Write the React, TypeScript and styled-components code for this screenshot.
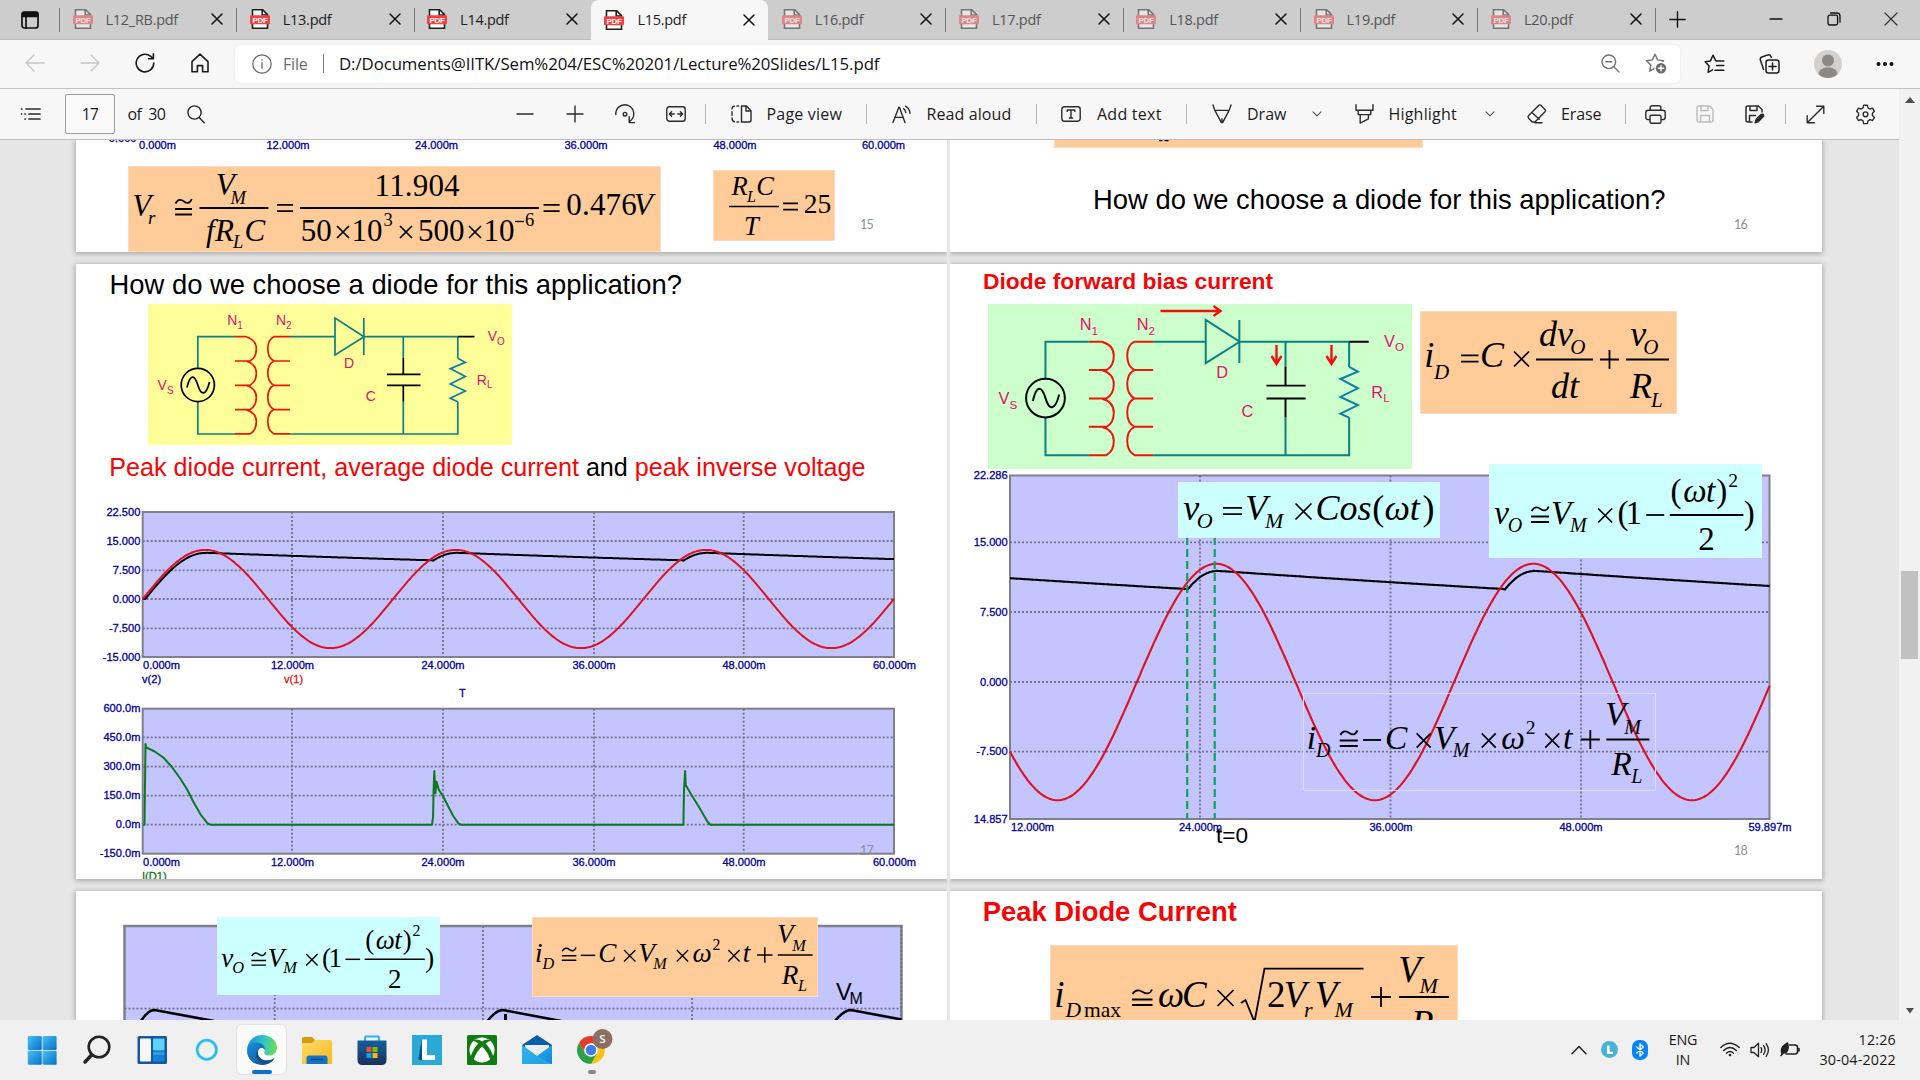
import React, { createContext, useContext } from "react";
import styled, { createGlobalStyle, css } from "styled-components";

const UI = `"Open Sans", "Noto Sans", sans-serif`;
const SANS = `"Liberation Sans", Arial, sans-serif`;
const SERIF = `"Liberation Serif", "Times New Roman", serif`;

const GlobalStyle = createGlobalStyle`
  * { box-sizing: border-box; }
  html, body { margin: 0; padding: 0; }
  body { width: 1920px; height: 1080px; overflow: hidden; font-family: ${UI}; color: #1b1b1b; background: #e6e6e6; }
  svg { display: block; flex: none; }
`;

const Screen = styled.div`
  display: flex;
  flex-direction: column;
  width: 1920px;
  height: 1080px;
  overflow: hidden;
`;

/* ---------- icons ---------- */

type IconProps = { w?: number; h?: number; vb?: string; c?: string; sw?: number; children: React.ReactNode };
const Icon = ({ w = 20, h = 20, vb, c = "#2b2b2b", sw = 1.4, children }: IconProps) => (
  <svg width={w} height={h} viewBox={vb ?? `0 0 ${w} ${h}`} fill="none" stroke={c} strokeWidth={sw} strokeLinecap="round" strokeLinejoin="round">
    {children}
  </svg>
);

const PdfMark = styled.text`
  font-family: ${SANS};
  font-weight: 700;
  font-size: 8px;
  fill: #fff;
  stroke: none;
`;

const PdfIcon = () => (
  <Icon vb="0 0 20 20" c="#1f1f1f" sw={1.6}>
    <path d="M2.5 19.2V.8h10.2l4.8 4.8v13.6z" fill="#fff" strokeLinejoin="miter" />
    <path d="M12.2 1v5h5" strokeLinejoin="miter" />
    <rect x="0" y="6.2" width="20" height="9" rx="1" fill="#f23f42" stroke="none" />
    <PdfMark x="10" y="13.6" textAnchor="middle">PDF</PdfMark>
  </Icon>
);

const CrossIcon = ({ s = 10, c = "#111", sw = 1.5 }: { s?: number; c?: string; sw?: number }) => (
  <Icon w={s + 2} h={s + 2} c={c} sw={sw}>
    <path d={`M1 1L${s + 1} ${s + 1}M${s + 1} 1L1 ${s + 1}`} />
  </Icon>
);

const Chevron = () => (
  <Icon w={10} h={6} c="#555" sw={1.2}><path d="M1 .8l4 4 4-4" /></Icon>
);

/* ---------- tab strip ---------- */

const TabStrip = styled.div`
  display: flex;
  height: 40px;
  flex: none;
  background: #cdcdcd;
  border-bottom: 1px solid #bdbdbd;
`;
const TabActions = styled.div`
  width: 59px;
  display: flex;
  align-items: center;
  padding-left: 21px;
`;
const Tab = styled.div<{ $active?: boolean; $dim?: boolean; $rule?: boolean }>`
  display: flex;
  align-items: center;
  width: 177.3px;
  flex: none;
  padding: 0 13px 1px 13.5px;
  font-size: 14.5px;
  letter-spacing: -0.28px;
  color: ${(p) => (p.$dim ? "#555" : "#1b1b1b")};
  ${(p) => p.$rule && css`background: linear-gradient(#777, #777) 0 8px / 1px 24px no-repeat;`}
  ${(p) => p.$active && css`
    height: 40px;
    background: #f7f7f7;
    border-radius: 8px 8px 0 0;
  `}
`;
const TabIcon = styled.span<{ $dim?: boolean }>`opacity: ${(p) => (p.$dim ? 0.5 : 1)};`;
const TabTitle = styled.span`
  flex: 1;
  padding-left: 13px;
  white-space: nowrap;
`;
const StripEnd = styled.div`
  display: flex;
  align-items: center;
  justify-content: space-between;
  flex: 1;
  height: 38px;
  padding: 0 22px 0 14px;
  background: linear-gradient(#777, #777) 0 8px / 1px 24px no-repeat;
`;
const WindowButtons = styled.div`
  display: flex;
  align-items: center;
  gap: 43.5px;
`;

const tabs = [
  { name: "L12_RB.pdf", dim: true, rule: true },
  { name: "L13.pdf", rule: true },
  { name: "L14.pdf", rule: true },
  { name: "L15.pdf", active: true },
  { name: "L16.pdf", dim: true },
  { name: "L17.pdf", dim: true, rule: true },
  { name: "L18.pdf", dim: true, rule: true },
  { name: "L19.pdf", dim: true, rule: true },
  { name: "L20.pdf", dim: true, rule: true },
];

const Tabs = () => (
  <TabStrip>
    <TabActions>
      <Icon w={18} h={18} c="#111" sw={1.7}>
        <rect x="1" y="1" width="16" height="16" rx="2.5" />
        <path d="M1.5 1.5h15v4h-15z" fill="#111" />
        <path d="M5 6v11" />
      </Icon>
    </TabActions>
    {tabs.map((t) => (
      <Tab key={t.name} $active={t.active} $dim={t.dim} $rule={t.rule}>
        <TabIcon $dim={t.dim}><PdfIcon /></TabIcon>
        <TabTitle>{t.name}</TabTitle>
        <CrossIcon />
      </Tab>
    ))}
    <StripEnd>
      <Icon w={17} h={17} c="#111"><path d="M8.5 .8v15.4M.8 8.5h15.4" /></Icon>
      <WindowButtons>
        <Icon w={14} h={14} c="#111" sw={1.3}><path d="M1 7h12" /></Icon>
        <Icon w={14} h={14} c="#111" sw={1.3}>
          <rect x="1" y="3.2" width="9.6" height="9.8" rx="1.8" />
          <path d="M3.6 1h6.2a3.2 3.2 0 013.2 3.2v6" />
        </Icon>
        <CrossIcon s={12} c="#333" sw={1.2} />
      </WindowButtons>
    </StripEnd>
  </TabStrip>
);

/* ---------- address bar ---------- */

const AddressRow = styled.div`
  display: flex;
  align-items: center;
  height: 49px;
  flex: none;
  background: #f7f7f7;
  border-bottom: 1px solid #c0c0c0;
`;
const NavButtons = styled.div`
  display: flex;
  align-items: center;
  gap: 35px;
  width: 235px;
  padding: 0 0 2px 25px;
`;
const AddressField = styled.div`
  display: flex;
  align-items: center;
  width: 1445px;
  height: 38px;
  padding: 0 13px 1px 17px;
  background: #fff;
  border-radius: 5px;
  box-shadow: 0 0 3px rgba(0, 0, 0, 0.08);
`;
const Scheme = styled.span`
  width: 41px;
  padding-left: 11px;
  font-size: 16px;
  color: #6b6b6b;
  letter-spacing: -0.2px;
`;
const FieldRule = styled.span`
  width: 1px;
  height: 19px;
  margin: 0 15px 0 10px;
  background: #7d7d7d;
`;
const Url = styled.span`
  flex: 1;
  font-size: 16.8px;
  letter-spacing: -0.07px;
  color: #111;
  white-space: nowrap;
`;
const FieldIcons = styled.div`
  display: flex;
  align-items: center;
  gap: 25px;
`;
const BrowserActions = styled.div`
  display: flex;
  align-items: center;
  gap: 34px;
  padding-left: 24px;
`;

const STAR = "M10 1.2l2.6 5.7 6 .8-4.5 4.2 1.2 6.3L10 15.1l-5.3 3.1 1.2-6.3L1.4 7.7l6-.8z";

const AddressBar = () => (
  <AddressRow>
    <NavButtons>
      <Icon c="#c6c6c6"><path d="M19 10H1M9 2l-8 8 8 8" /></Icon>
      <Icon c="#c6c6c6"><path d="M1 10h18M11 2l8 8-8 8" /></Icon>
      <Icon c="#1b1b1b" sw={1.6}><path d="M18.8 10A8.8 8.8 0 1 1 15.5 3.2L18.4 5.6M18.4.9v4.9h-4.9" /></Icon>
      <Icon c="#1b1b1b" sw={1.6}><path d="M2 8.6L10 1.2l8 7.4v10.2h-5.4v-6.2H7.4v6.2H2z" /></Icon>
    </NavButtons>
    <AddressField>
      <Icon c="#6b6b6b" sw={1.3}><circle cx="10" cy="10" r="9.2" /><path d="M10 8.7v5.6M10 5.6v.4" /></Icon>
      <Scheme>File</Scheme>
      <FieldRule />
      <Url>D:/Documents@IITK/Sem%204/ESC%20201/Lecture%20Slides/L15.pdf</Url>
      <FieldIcons>
        <Icon w={19} h={19} c="#737373"><circle cx="7.8" cy="7.8" r="6.8" /><path d="M4.8 7.8h6M12.8 12.8l5.2 5.2" /></Icon>
        <Icon w={22} h={22} c="#737373">
          <path d={STAR} />
          <circle cx="16" cy="15.2" r="6.4" fill="#fff" stroke="none" />
          <circle cx="16" cy="15.2" r="5.2" fill="#6b6b6b" stroke="none" />
          <path d="M16 12.6v5.2M13.4 15.2h5.2" stroke="#fff" />
        </Icon>
      </FieldIcons>
    </AddressField>
    <BrowserActions>
      <Icon w={21} h={20} c="#1b1b1b" sw={1.5}>
        <path d="M12 6.8h-.2L9 1.2 6.4 6.9l-5.2.8 3.9 4.2-1 6.4 4.4-2.4M12.6 7h7.2M12.6 11.6h7.2M11 16.2h8.8" />
      </Icon>
      <Icon w={21} h={20} c="#1b1b1b" sw={1.5}>
        <rect x="7" y="6" width="13" height="13" rx="2.5" />
        <path d="M13.5 9v7M10 12.5h7M4.5 15.3L1.3 5.8Q.8 3.8 2.8 3L9 .9q2-.5 2.8 1.2l.6 1.2" />
      </Icon>
      <Icon w={28} h={28} sw={0}>
        <circle cx="14" cy="14" r="14" fill="#d3d1cf" />
        <circle cx="14" cy="10.5" r="6" fill="#8b8885" />
        <path d="M4.5 24.2c1-5 4.5-6.6 9.5-6.6s8.5 1.6 9.5 6.6A14 14 0 0 1 4.5 24.2z" fill="#8b8885" />
      </Icon>
      <Icon w={18} h={6} sw={0}>
        <circle cx="2.5" cy="3" r="2" fill="#111" /><circle cx="9" cy="3" r="2" fill="#111" /><circle cx="15.5" cy="3" r="2" fill="#111" />
      </Icon>
    </BrowserActions>
  </AddressRow>
);

/* ---------- pdf toolbar and scrollbar ---------- */

const Main = styled.div`
  display: flex;
  height: 931px;
  flex: none;
`;
const Reader = styled.div`
  display: flex;
  flex-direction: column;
  width: 1899px;
`;
const Toolbar = styled.div`
  display: flex;
  align-items: center;
  height: 51px;
  flex: none;
  padding-left: 20px;
  background: #f7f7f7;
  border-bottom: 1px solid #bdbdbd;
  font-size: 16px;
`;
const Tool = styled.div<{ $w: number; $ml?: number }>`
  display: flex;
  align-items: center;
  width: ${(p) => p.$w}px;
  flex: none;
  margin-left: ${(p) => p.$ml ?? 0}px;
  white-space: nowrap;
`;
const ToolLabel = styled.span<{ $ls?: number; $ml?: number; $w?: number }>`
  margin-left: ${(p) => p.$ml ?? 0}px;
  letter-spacing: ${(p) => p.$ls ?? 0}px;
  ${(p) => p.$w && css`width: ${p.$w}px;`}
`;
const ToolRule = styled.div<{ $ml: number }>`
  width: 1px;
  height: 20px;
  flex: none;
  margin-left: ${(p) => p.$ml}px;
  background: #b5b5b5;
`;
const PageInput = styled.div`
  display: flex;
  align-items: center;
  justify-content: center;
  width: 50px;
  height: 40px;
  margin-left: 24px;
  border: 1px solid #9b9b9b;
  border-radius: 2px;
  background: #f9f9f9;
  font-size: 15.5px;
  letter-spacing: -0.6px;
`;

const PdfToolbar = () => (
  <Toolbar>
    <Tool $w={21}>
      <Icon w={21} h={14}><path d="M6 2h14M9 7h11M9 12h11M1.5 2h.4M1.5 7h.2M5 7h.4M5 12h.4" strokeWidth="1.7" /></Icon>
    </Tool>
    <PageInput>17</PageInput>
    <Tool $w={34} $ml={12.5}><ToolLabel $ls={-0.65}>of&nbsp; 30</ToolLabel></Tool>
    <Tool $w={18} $ml={25.5}><Icon w={18} h={19}><circle cx="7.5" cy="7.5" r="6.6" /><path d="M12.2 12.4l5 5.4" /></Icon></Tool>
    <Tool $w={18} $ml={311}><Icon w={18} h={18}><path d="M1 9h16" /></Icon></Tool>
    <Tool $w={18} $ml={32}><Icon w={18} h={18}><path d="M1 9h16M9 1v16" /></Icon></Tool>
    <Tool $w={20} $ml={31}>
      <Icon><path d="M.8 10.5A9 9 0 1 1 15 17.2M14.2 12.8v5.8h5.4" /><circle cx="10" cy="10.2" r="1.8" /></Icon>
    </Tool>
    <Tool $w={20} $ml={31}>
      <Icon w={20} h={16}><rect x=".8" y=".8" width="18.4" height="14.4" rx="2.4" /><path d="M3.6 8h4.6M11.8 8h4.6M5.6 5.7L3.4 8l2.2 2.3M14.4 5.7L16.6 8l-2.2 2.3" /></Icon>
    </Tool>
    <ToolRule $ml={19} />
    <Tool $w={112} $ml={25}>
      <Icon w={21} h={18}><path d="M10.5 1h5l4.5 4.8V15q0 2-2 2h-7.500zM15 1.2V6h4.8M7.6 1H6M3.4 1.2Q1 1.4 1 3.8M1 6.8v3.4M1 13q0 3.2 2.4 3.8M6 17h1.6" /></Icon>
      <ToolLabel $ml={14.5} $ls={0.2}>Page view</ToolLabel>
    </Tool>
    <ToolRule $ml={22.5} />
    <Tool $w={120} $ml={25.5}>
      <Icon w={20} h={19}><path d="M1 17.6L6.8 2.2h.6l5.600 15.400M3 12.4h8.2M11.6 3.6q2 1.4 2.2 4M13.6 1.2q4 2.4 4.4 7.2" /></Icon>
      <ToolLabel $ml={14.5} $ls={0.1}>Read aloud</ToolLabel>
    </Tool>
    <ToolRule $ml={24} />
    <Tool $w={101} $ml={24}>
      <Icon w={20} h={16}><rect x=".8" y=".8" width="18.4" height="14.4" rx="2.6" /><path d="M6.2 5.4V4h7.6v1.4M10 4v8M8.4 12h3.2" /></Icon>
      <ToolLabel $ml={16} $ls={0.25}>Add text</ToolLabel>
    </Tool>
    <ToolRule $ml={23.5} />
    <Tool $w={110} $ml={25.5}>
      <Icon w={20} h={20}><path d="M1 1l1.8 5.4h14.4L19 1M3 6.6l6.4 12h1.2l6.400-12M10 14.8v3.8" /></Icon>
      <ToolLabel $ml={15} $w={65}>Draw</ToolLabel>
      <Chevron />
    </Tool>
    <Tool $w={140} $ml={32.5}>
      <Icon w={19} h={20}><path d="M1 .8v5.400h17V.8M3.2 6.4v4.2h12.6V6.4M5.2 10.8v8.4l8.200-4.4v-4" /></Icon>
      <ToolLabel $ml={15} $w={96.5} $ls={0.2}>Highlight</ToolLabel>
      <Chevron />
    </Tool>
    <Tool $w={76} $ml={32}>
      <Icon w={20} h={20}><path d="M1.600 11.600l10-10.200q1.200-1 2.400 0l4 4q1 1.200 0 2.400L8 18H5.200l-3.600-3.800q-1-1.400 0-2.600zM5 8.400l7.200 6.800M8 18.800h7" /></Icon>
      <ToolLabel $ml={14.5} $ls={-0.1}>Erase</ToolLabel>
    </Tool>
    <ToolRule $ml={22} />
    <Tool $w={21} $ml={19}>
      <Icon w={21} h={19}><path d="M5.2 5V2.6q0-1.800 1.800-1.800h7q1.800 0 1.800 1.800V5M4.600 14.600H3.200q-2.400 0-2.400-2.400V7.600Q.8 5.200 3.200 5.200h14.600q2.400 0 2.400 2.400v4.600q0 2.400-2.400 2.400h-1.400" /><rect x="5" y="10.200" width="11" height="8" rx="1.5" /></Icon>
    </Tool>
    <Tool $w={18} $ml={30}>
      <Icon w={18} h={18} c="#bdbdbd"><path d="M1 3q0-2 2-2h10.500L17 4.500V15q0 2-2 2H3q-2 0-2-2zM5 1v4.500h7V1M4.500 17v-6.500h9V17" /></Icon>
    </Tool>
    <Tool $w={20} $ml={31.5}>
      <Icon w={20} h={19} sw={1.5}><path d="M7 17H3q-2 0-2-2V3q0-2 2-2h10.500L17 4.500V7M5 1v4.500h7V1M4.500 17v-6.500h6" /><path d="M17.600 9.200q1.400.6 1 2l-5.200 5.400-3.200 1.200 1-3.400 5-5z" fill="#2b2b2b" /></Icon>
    </Tool>
    <ToolRule $ml={20} />
    <Tool $w={19} $ml={20}>
      <Icon w={19} h={19}><path d="M1.200 17.800L17.800 1.200M10.600 1.200h7.200v7.200M1.200 10.600v7.200h7.200" /></Icon>
    </Tool>
    <Tool $w={21} $ml={29.5}>
      <Icon w={21} h={21}>
        <path d="M8.700 1.200h3.600l.7 2.700 1.900 1.100 2.700-.8 1.800 3.100-2 1.900v2.300l2 1.900-1.800 3.100-2.700-.8-1.900 1.100-.7 2.800H8.700L8 16.800l-1.900-1.100-2.700.8-1.800-3.100 2-1.900V9.200l-2-1.900 1.800-3.100 2.700.8L8 3.900z" />
        <circle cx="10.5" cy="10.300" r="2.400" />
      </Icon>
    </Tool>
  </Toolbar>
);

const Scrollbar = styled.div`
  display: flex;
  flex-direction: column;
  justify-content: space-between;
  align-items: center;
  width: 21px;
  padding: 8px 0 6px;
  background: #f1f1f1;
`;
const Track = styled.div`
  flex: 1;
  padding-top: 468px;
`;
const Thumb = styled.div`
  width: 17px;
  height: 88px;
  background: #c1c1c1;
`;

/* ---------- slides ---------- */

const Sheet = styled.div`
  display: grid;
  grid-template-columns: 871px 872px;
  grid-template-rows: 112px 615px 129px;
  gap: 12px 3px;
  height: 880px;
  overflow: hidden;
  padding-left: 76px;
  background: #e6e6e6;
`;
const SlideBox = styled.div`
  position: relative;
  overflow: hidden;
  background: #fff;
`;
const SlideShadow = styled.div`
  display: grid;
  box-shadow: 0 1px 5px 1px rgba(0, 0, 0, 0.26);
  &:nth-child(odd) { clip-path: inset(-8px 0 -8px -8px); }
  &:nth-child(even) { clip-path: inset(-8px -8px -8px 0); }
`;

/* Items on a slide are placed in sheet coordinates; each slide knows its own origin. */
const Origin = createContext<[number, number]>([0, 0]);

const Slide = ({ at, children }: { at: [number, number]; children: React.ReactNode }) => (
  <Origin.Provider value={at}>
    <SlideShadow><SlideBox>{children}</SlideBox></SlideShadow>
  </Origin.Provider>
);

const Placed = styled.div<{ $x: number; $y: number; $w?: number; $h?: number; $fill?: string; $line?: string }>`
  position: absolute;
  left: ${(p) => p.$x}px;
  top: ${(p) => p.$y}px;
  ${(p) => p.$w && css`width: ${p.$w}px;`}
  ${(p) => p.$h && css`height: ${p.$h}px;`}
  background: ${(p) => p.$fill ?? "transparent"};
  ${(p) => p.$line && css`box-shadow: inset 0 0 0 1px ${p.$line};`}
`;

type Box = [number, number, number, number];

const Figure = ({ box, view, fill, line, children }: { box: Box; view?: Box; fill?: string; line?: string; children: React.ReactNode }) => {
  const [ox, oy] = useContext(Origin);
  const v = view ?? box;
  return (
    <Placed $x={box[0] - ox} $y={box[1] - oy} $w={box[2]} $h={box[3]} $fill={fill} $line={line}>
      <svg width={box[2]} height={box[3]} viewBox={v.join(" ")} preserveAspectRatio="none" overflow="visible">
        {children}
      </svg>
    </Placed>
  );
};

const Line = styled(Placed)<{ $size: number; $color?: string; $bold?: boolean; $family?: string; $ls?: number }>`
  font-family: ${(p) => p.$family ?? SANS};
  font-size: ${(p) => p.$size}px;
  line-height: 1;
  font-weight: ${(p) => (p.$bold ? 700 : 400)};
  color: ${(p) => p.$color ?? "#000"};
  letter-spacing: ${(p) => p.$ls ?? 0}px;
  white-space: pre;
`;
const Red = styled.span`color: #f50505;`;

type WriteProps = { x: number; y: number; size: number; color?: string; bold?: boolean; family?: string; ls?: number; children: React.ReactNode };
const Write = ({ x, y, size, color, bold, family, ls, children }: WriteProps) => {
  const [ox, oy] = useContext(Origin);
  return (
    <Line $x={x - ox} $y={y - oy - 0.8465 * size} $size={size} $color={color} $bold={bold} $family={family} $ls={ls}>{children}</Line>
  );
};
const PageNumber = ({ x, y, children }: { x: number; y: number; children: React.ReactNode }) => (
  <Write x={x} y={y} size={12.5} color="#8f8f8f" family={`Lato, ${UI}`} ls={-0.7}>{children}</Write>
);

/* ---------- formulas ---------- */

const Glyph = styled.text<{ $roman?: boolean }>`
  font-family: ${SERIF};
  font-style: ${(p) => (p.$roman ? "normal" : "italic")};
  fill: #000;
`;
const bearing: Record<string, number> = { V: 0.076, C: 0.066, v: 0.021, O: 0.06, i: 0.049, t: 0.038, "(": 0.05, "1": 0.11, "0": 0.024, "5": 0.03, "2": 0.03, T: 0.06 };
const roman = /^[0-9.()]/;

type Mark = [x: number, y: number, text: string, size: number, width?: number];
const Marks = ({ list }: { list: Mark[] }) => (
  <>
    {list.map(([x, y, t, s, w], i) => (
      <Glyph key={i} $roman={roman.test(t) || t === "max"} x={x - (bearing[t[0]] ?? 0) * s} y={y} fontSize={s} textLength={w}>{t}</Glyph>
    ))}
  </>
);

const Bar = ({ x1, x2, y, w = 1.8 }: { x1: number; x2: number; y: number; w?: number }) => (
  <path d={`M${x1} ${y}H${x2}`} stroke="#000" strokeWidth={w} />
);
const Equals = ({ x, y, w = 16 }: { x: number; y: number; w?: number }) => (
  <path d={`M${x} ${y - 3.2}h${w}M${x} ${y + 3.2}h${w}`} stroke="#000" strokeWidth="1.8" />
);
const Approx = ({ x, y, w = 18 }: { x: number; y: number; w?: number }) => (
  <path
    d={`M${x} ${y + 2}h${w}M${x} ${y + 7.5}h${w}M${x + 0.5} ${y - 3.5}c${w * 0.15} -5 ${w * 0.35} -4 ${w * 0.5} -2s${w * 0.35} 2.5 ${w * 0.45} -2.5`}
    stroke="#000" strokeWidth="1.8" fill="none"
  />
);
const Times = ({ x, y, r = 7 }: { x: number; y: number; r?: number }) => (
  <path d={`M${x - r} ${y - r}l${2 * r} ${2 * r}M${x + r} ${y - r}l${-2 * r} ${2 * r}`} stroke="#000" strokeWidth="1.7" />
);
const Plus = ({ x, y, r = 9.5 }: { x: number; y: number; r?: number }) => (
  <path d={`M${x - r} ${y}h${2 * r}M${x} ${y - r}v${2 * r}`} stroke="#000" strokeWidth="1.8" />
);

const ORANGE = "#ffcc99";
const CYAN = "#ccffff";

const RippleFormula = () => (
  <Figure box={[128, 166, 533, 86]} fill={ORANGE} line="#f9dcc0">
    <Marks list={[
      [134.6, 215.6, "V", 31], [148, 224.2, "r", 19],
      [218, 195.2, "V", 31], [230.5, 204.2, "M", 18.5],
      [206, 240.7, "f", 31], [215, 240.7, "R", 31], [233, 247.7, "L", 18.5], [246.6, 240.7, "C", 31],
      [378, 195.6, "11.904", 31, 85],
      [301.7, 240.7, "50", 31], [355, 240.7, "10", 31], [383.5, 226, "3", 18.5],
      [419, 240.7, "500", 31], [487, 240.7, "10", 31], [525, 226, "6", 18.5],
      [567, 215.3, "0.476", 31, 70.5], [636, 215.3, "V", 31, 17.5],
    ]} />
    <Approx x={175} y={207} w={17} />
    <Bar x1={199.5} x2={268.4} y={208} />
    <Equals x={277} y={208} />
    <Bar x1={300} x2={538.8} y={208} />
    <Times x={343} y={232} r={6} />
    <Times x={406} y={232} r={6} />
    <Times x={475} y={232} r={6} />
    <Bar x1={515} x2={524} y={221.5} w={1.3} />
    <Equals x={543.6} y={208} />
  </Figure>
);

const RatioFormula = () => (
  <Figure box={[713, 170, 122, 71]} fill={ORANGE} line="#f9dcc0">
    <Marks list={[
      [731.6, 195, "R", 26.5], [747, 202, "L", 16], [758, 195, "C", 26.5],
      [745.5, 234.7, "T", 26.5], [804.6, 212.7, "25", 27.5],
    ]} />
    <Bar x1={729} x2={779} y={206.5} w={1.5} />
    <Equals x={783} y={206.5} w={15} />
  </Figure>
);

const DiodeCurrentFormula = () => (
  <Figure box={[1420, 311, 257, 103]} fill={ORANGE} line="#f9dcc0">
    <Marks list={[
      [1426, 367.2, "i", 36], [1434, 378.5, "D", 21], [1482.5, 367.2, "C", 36],
      [1539, 345.5, "dv", 36], [1571.5, 354, "O", 21], [1551, 398, "dt", 36],
      [1631, 345.5, "v", 36], [1644.6, 354, "O", 21], [1630, 398, "R", 36], [1651, 406.5, "L", 21],
    ]} />
    <Equals x={1461} y={358.5} w={17.5} />
    <Times x={1521.5} y={359} r={7.5} />
    <Bar x1={1536} x2={1593} y={359.5} />
    <Plus x={1609.5} y={359.5} />
    <Bar x1={1626} x2={1669} y={359.5} />
  </Figure>
);

const CosineFormula = () => (
  <Figure box={[1178, 482, 262, 56]} fill={CYAN} line="#dff6f6">
    <Marks list={[
      [1184, 519.5, "v", 36], [1198, 528, "O", 22], [1248, 519.5, "V", 36], [1265, 528, "M", 22],
      [1318, 519.5, "Cos", 36], [1374, 519.5, "(", 36], [1384.5, 519.5, "ω", 36], [1411, 519.5, "t", 36], [1422.5, 519.5, ")", 36],
    ]} />
    <Equals x={1223} y={511} w={19} />
    <Times x={1303.5} y={511.5} r={8} />
  </Figure>
);

const PARABOLA_VIEW: Box = [1489, 464, 272.6, 94];
const ParabolaFormula = ({ box }: { box: Box }) => (
  <Figure box={box} view={PARABOLA_VIEW} fill={CYAN} line="#dff6f6">
    <Marks list={[
      [1495, 524, "v", 33], [1509, 532, "O", 20], [1553.5, 524, "V", 33], [1570, 532, "M", 20],
      [1619, 524, "(", 33], [1629, 524, "1", 33],
      [1672, 502, "(", 33], [1683, 502, "ω", 33], [1707, 502, "t", 33], [1716, 502, ")", 33], [1728.5, 487, "2", 19.5],
      [1699, 550, "2", 33], [1743.5, 524, ")", 33],
    ]} />
    <Approx x={1531} y={514.5} w={18} />
    <Times x={1605} y={515.5} />
    <Bar x1={1646} x2={1664} y={515} />
    <Bar x1={1669.5} x2={1743} y={515} />
  </Figure>
);

const CURRENT_VIEW: Box = [1303, 693.3, 352.6, 97.4];
const LinearCurrentFormula = ({ box, fill, line }: { box: Box; fill?: string; line: string }) => (
  <Figure box={box} view={CURRENT_VIEW} fill={fill} line={line}>
    <Marks list={[
      [1308.5, 748.5, "i", 33.5], [1316, 757, "D", 20], [1387, 748.5, "C", 33.5],
      [1436.5, 748.5, "V", 33.5], [1452.5, 757, "M", 20], [1501, 748.5, "ω", 33.5], [1526, 734, "2", 19.5],
      [1564, 748.5, "t", 33.5], [1607.5, 725.5, "V", 33.5], [1624, 734.5, "M", 20],
      [1611, 774.5, "R", 33.5], [1631, 783, "L", 20],
    ]} />
    <Approx x={1339.7} y={738.5} w={18} />
    <Bar x1={1363} x2={1381} y={740} />
    <Times x={1423.5} y={740.5} />
    <Times x={1488.5} y={740.5} />
    <Times x={1552} y={740.5} />
    <Plus x={1590} y={739.5} r={9.5} />
    <Bar x1={1606} x2={1649} y={739.5} />
  </Figure>
);

const PeakFormula = () => (
  <Figure box={[1050, 945, 408, 80]} fill={ORANGE} line="#f9dcc0">
    <Marks list={[
      [1056, 1007, "i", 37], [1065.5, 1017, "D", 21.5], [1084, 1017, "max", 21.5],
      [1158, 1007, "ω", 37], [1184.5, 1007, "C", 37],
      [1268, 1007, "2", 37], [1286.5, 1007, "V", 37], [1304, 1017, "r", 22], [1317.5, 1007, "V", 37], [1334.6, 1017, "M", 22],
      [1401, 981.5, "V", 37], [1419.5, 993, "M", 22], [1411, 1036, "R", 37],
    ]} />
    <Approx x={1132} y={997.5} w={20.5} />
    <Times x={1225.5} y={998} r={8} />
    <path d="M1241 1003l4.500-3 9 22 10-53.300h99" fill="none" stroke="#000" strokeWidth="1.8" />
    <Plus x={1381} y={997} r={10} />
    <Bar x1={1399} x2={1449} y={997} />
  </Figure>
);

/* ---------- circuit ---------- */

const Label = styled.text`
  font-family: ${SANS};
  font-size: 14px;
  fill: #e0106c;
`;
const Sub = styled.tspan`font-size: 10px;`;

const leftBumps = [336.7, 361, 385.3, 409.6].map((y) => `M235 ${y}H246Q256.3 ${y + 3} 256.3 ${y + 12}Q256.3 ${y + 21} 250 ${y + 24.3}H235`).join("");
const rightBumps = [336.7, 361, 385.3, 409.6].map((y) => `M290 ${y}H274Q267.8 ${y + 3} 267.8 ${y + 12}Q267.8 ${y + 21} 274 ${y + 24.3}H290`).join("");

const Circuit = ({ box, view, fill, nY = 324.7, children }: { box: Box; view: Box; fill: string; nY?: number; children?: React.ReactNode }) => (
  <Figure box={box} view={view} fill={fill}>
    <g fill="none" strokeWidth="1.7">
      <g stroke="#0b8080">
        <path d="M197.8 368.4V336.7H235M197.8 401.6V434H235M290 336.7H335M335 318V355L364 336.7zM363.8 318V355M364 336.7H457.8M290 434H457.8V401.7M403.3 336.7V358M403.3 401.7V434M457.8 336.7V358.3" />
      </g>
      <path d="M457.8 358.300l7.500 4-15 6.300 15 8-15 7.400 15 7-15 7.300 7.500 3.400" stroke="#0b7fa8" />
      <path d={leftBumps + rightBumps} stroke="#f0140a" />
      <g stroke="#000">
        <circle cx="197.8" cy="385" r="16.6" />
        <path d="M187 387.5C190 374 194.5 374 197.8 385S206 396 209.5 382" />
        <path d="M457.8 336.7H474.5M403.3 358V374.3M387 374.3H420.5M387 385.3H420.5M403.3 385.3V401.7" />
      </g>
    </g>
    <Label x="227.2" y={nY}>N<Sub dy="4.300">1</Sub></Label>
    <Label x="276" y={nY}>N<Sub dy="4.300">2</Sub></Label>
    <Label x="344" y="368">D</Label>
    <Label x="365.7" y="401">C</Label>
    <Label x="157.6" y="390">V<Sub dy="4">S</Sub></Label>
    <Label x="487.7" y="341">V<Sub dy="4">O</Sub></Label>
    <Label x="476.8" y="385">R<Sub dy="3.500">L</Sub></Label>
    {children}
  </Figure>
);

/* ---------- plots ---------- */

const Tick = styled.text<{ $c?: string }>`
  font-family: ${SANS};
  font-size: 11.1px;
  fill: ${(p) => p.$c ?? "#00009c"};
  stroke: ${(p) => p.$c ?? "#00009c"};
  stroke-width: 0.3px;
`;

type PlotProps = {
  area: Box;
  xs: number[];
  ys: number[];
  xLabels?: [number, string][];
  yLabels?: [number, string][];
  xBase?: number;
  frame?: number;
};
const Plot = ({ area: [x, y, w, h], xs, ys, xLabels = [], yLabels = [], xBase = 0, frame = 2 }: PlotProps) => (
  <>
    <rect x={x} y={y} width={w} height={h} fill="#c4c4ff" stroke="#808088" strokeWidth={frame} />
    <g stroke="#72728a" strokeWidth="1.800" strokeDasharray="2 2">
      {xs.map((gx) => <path key={gx} d={`M${gx} ${y}v${h}`} />)}
      {ys.map((gy) => <path key={gy} d={`M${x} ${gy}h${w}`} />)}
    </g>
    {xLabels.map(([lx, t]) => <Tick key={t} x={lx} y={xBase} textAnchor="middle">{t}</Tick>)}
    {yLabels.map(([ly, t]) => <Tick key={t} x={x - 2.3} y={ly + 3.6} textAnchor="end">{t}</Tick>)}
  </>
);

const AMP = 12.7;
const sine = (t: number) => AMP * Math.sin((2 * Math.PI * t) / 20);
const smoothed = (t: number) => {
  const phase = t % 20;
  if (t < 5) return Math.max(0, sine(t) - 0.8);
  if (phase > 3.2 && phase <= 5) return sine(t) - 0.8;
  const since = phase > 5 ? phase - 5 : phase + 15;
  return 11.95 * Math.exp(-since / 101);
};
const trace = (f: (t: number) => number, from: number, to: number, px: (t: number) => number, py: (v: number) => number) => {
  const pts: string[] = [];
  for (let t = from; t <= to + 0.001; t += 0.1) pts.push(`${px(t).toFixed(1)} ${py(f(t)).toFixed(1)}`);
  return "M" + pts.join("L");
};

const timeLabels: [number, string][] = [[161.5, "0.000m"], [292.5, "12.000m"], [443, "24.000m"], [594, "36.000m"], [744, "48.000m"], [894.500, "60.000m"]];

const VoltagePlot = () => {
  const px = (t: number) => 142.7 + t * 12.52;
  const py = (v: number) => 599 - v * 3.87;
  return (
    <Figure box={[90, 500, 840, 200]}>
      <Plot
        area={[142.7, 512, 751.3, 145]}
        xs={[292, 443, 594, 743.7]}
        ys={[541, 570.3, 599, 628.3]}
        xBase={669}
        xLabels={timeLabels}
        yLabels={[[512, "22.500"], [541, "15.000"], [570.3, "7.500"], [599, "0.000"], [628.3, "-7.500"], [657, "-15.000"]]}
      />
      <path d={trace(smoothed, 0, 60, px, py)} fill="none" stroke="#000" strokeWidth="2" />
      <path d={trace(sine, 0, 60, px, py)} fill="none" stroke="#e01020" strokeWidth="2" />
      <Tick x={142} y={683}>v(2)</Tick>
      <Tick x={284} y={683} $c="#d01818">v(1)</Tick>
      <Tick x={459} y={697}>T</Tick>
    </Figure>
  );
};

const CurrentPlot = () => (
  <Figure box={[90, 700, 840, 185]}>
    <Plot
      area={[142.7, 708.7, 751.3, 145]}
      xs={[292, 443, 594, 743.7]}
      ys={[737.3, 766.7, 795.7, 824.7]}
      xBase={865.5}
      xLabels={timeLabels}
      yLabels={[[708, "600.0m"], [737.3, "450.0m"], [766.7, "300.0m"], [795.7, "150.0m"], [824.7, "0.0m"], [853.7, "-150.0m"]]}
    />
    <path
      d="M143 824.7H144.5L145.5 744L146.1 747.3L154.7 751.5L163.3 757.5L171.9 767L180.6 779L187.4 790L193.2 801.5L200.6 814.5L207.5 823.3L210.4 824.7H432L433.1 816.7L433.5 793L434.3 771L435.4 793.3L436.6 781.7L438.9 790L442.9 796L447.5 805L453.2 816L458.4 823.3L460.7 824.7H683.4L684 790L685.1 771L685.7 785L691.5 795L698.4 806L707.5 821.7L710.4 824.7H894"
      fill="none" stroke="#0b7a1c" strokeWidth="2" strokeLinejoin="round"
    />
    <Tick x={142} y={880} $c="#0b7a1c">I(D1)</Tick>
  </Figure>
);

const DetailPlot = () => {
  const px = (t: number) => 1010 + (t - 12) * 15.86;
  const py = (v: number) => 682 - v * 9.31;
  return (
    <Figure box={[972, 470, 840, 380]}>
      <Plot
        area={[1010, 475.5, 759.5, 343.5]}
        xs={[1200, 1390.5, 1581]}
        ys={[542.3, 612, 682, 751.7]}
        xBase={831}
        xLabels={[[1032.5, "12.000m"], [1200.500, "24.000m"], [1391, "36.000m"], [1581, "48.000m"], [1770, "59.897m"]]}
        yLabels={[[475, "22.286"], [542.3, "15.000"], [612, "7.500"], [682, "0.000"], [751.7, "-7.500"], [819, "14.857"]]}
      />
      <path d={trace(smoothed, 12, 59.9, px, py)} fill="none" stroke="#000" strokeWidth="2.1" />
      <path d={trace(sine, 12, 59.9, px, py)} fill="none" stroke="#e01020" strokeWidth="2.1" />
      <path d="M1187.2 537V819M1214.7 537V819" stroke="#0fa35c" strokeWidth="2.200" strokeDasharray="8 4" />
    </Figure>
  );
};

const ZoomedPlot = () => (
  <Figure box={[120, 920, 800, 100]}>
    <Plot area={[124.5, 926, 777, 130]} xs={[274.7, 483, 692, 901]} ys={[1008.7]} frame={2.5} />
    <path d="M141 1021Q148 1010 154.7 1010L214 1021M487.5 1021Q496 1010 503 1010L561 1021M835 1021Q844 1010 851 1010L901.6 1019.5" fill="none" stroke="#000" strokeWidth="2.6" />
    <path d="M505.5 1014V1021" stroke="#000" strokeWidth="3" />
  </Figure>
);

const Arrow = ({ d }: { d: string }) => <path d={d} fill="none" stroke="#f01010" strokeWidth="2.4" />;
const QUESTION = "How do we choose a diode for this application?";

const Slides = () => (
  <Sheet>
    <Slide at={[76, 140]}>
      <Figure box={[100, 140, 820, 20]}>
        <Tick x={136.5} y={141.5} textAnchor="end">0.000</Tick>
        {([[157.5, "0.000m"], [288, "12.000m"], [436.5, "24.000m"], [586, "36.000m"], [735, "48.000m"], [883.5, "60.000m"]] as [number, string][]).map(([x, t]) => (
          <Tick key={t} x={x} y={149} textAnchor="middle">{t}</Tick>
        ))}
      </Figure>
      <RippleFormula />
      <RatioFormula />
      <PageNumber x={860} y={230}>15</PageNumber>
    </Slide>
    <Slide at={[950, 140]}>
      <Figure box={[1054, 130, 369, 18]} fill={ORANGE} line="#f9dcc0">
        <path d="M1159 140.5h3.5m2 0h4" stroke="#000" strokeWidth="1.5" />
      </Figure>
      <Write x={1093} y={209.500} size={27.400}>{QUESTION}</Write>
      <PageNumber x={1734} y={230}>16</PageNumber>
    </Slide>
    <Slide at={[76, 264]}>
      <Write x={109.500} y={294.300} size={27.400}>{QUESTION}</Write>
      <Circuit box={[148, 304, 364, 140.7]} view={[148, 304, 364, 140.7]} fill="#ffff99" />
      <Write x={109.300} y={476.300} size={25.150}>
        <Red>Peak diode current, average diode current</Red> and <Red>peak inverse voltage</Red>
      </Write>
      <VoltagePlot />
      <CurrentPlot />
      <PageNumber x={860} y={856}>17</PageNumber>
    </Slide>
    <Slide at={[950, 264]}>
      <Write x={983} y={289.500} size={22.800} bold color="#f50505">Diode forward bias current</Write>
      <Circuit box={[988, 304, 424, 165]} view={[148.6, 304.4, 363, 141.3]} fill="#ccffcc" nY={326.300}>
        <g transform="translate(149 304.400) scale(.8562) translate(-988 -304)">
          <Arrow d="M1160 311H1219M1213 306l7 5-7 5" />
          <Arrow d="M1276 345V363M1271 356l5 8 5-8" />
          <Arrow d="M1331 345V363M1326 356l5 8 5-8" />
        </g>
      </Circuit>
      <DiodeCurrentFormula />
      <DetailPlot />
      <CosineFormula />
      <ParabolaFormula box={[1489, 464, 273, 94]} />
      <LinearCurrentFormula box={[1303, 693, 353, 98]} line="#dcdcf4" />
      <Write x={1216} y={844.500} size={22.600}>t=0</Write>
      <PageNumber x={1734} y={856}>18</PageNumber>
    </Slide>
    <Slide at={[76, 891]}>
      <ZoomedPlot />
      <ParabolaFormula box={[217, 917, 223, 78]} />
      <LinearCurrentFormula box={[532, 917, 286, 80]} fill={ORANGE} line="#f9dcc0" />
      <Write x={836} y={1000.500} size={23.500}>V</Write>
      <Write x={849.500} y={1005} size={16}>M</Write>
    </Slide>
    <Slide at={[950, 891]}>
      <Write x={982.700} y={921.300} size={27.400} bold color="#f50505">Peak Diode Current</Write>
      <PeakFormula />
    </Slide>
  </Sheet>
);

/* ---------- taskbar ---------- */

const Taskbar = styled.div`
  display: flex;
  justify-content: space-between;
  height: 60px;
  flex: none;
  padding: 0 24px 0 14px;
  background: #f0f0f0;
`;
const Apps = styled.div`display: flex;`;
const AppSlot = styled.div<{ $open?: boolean }>`
  display: flex;
  flex-direction: column;
  align-items: center;
  width: 49px;
  height: 49px;
  margin: 5px 3px 0;
  padding-top: 10px;
  border-radius: 5px;
  ${(p) => p.$open && css`background: #fafafa; box-shadow: 0 0 1px 1px rgba(0, 0, 0, 0.06);`}
`;
const Indicator = styled.span<{ $w: number; $c: string }>`
  width: ${(p) => p.$w}px;
  height: 4px;
  margin-top: 5px;
  border-radius: 2px;
  background: ${(p) => p.$c};
`;
const Tray = styled.div`
  display: flex;
  align-items: center;
  height: 59px;
`;
const TrayText = styled.div<{ $w: number; $right?: boolean; $ml: number; $ls?: number }>`
  width: ${(p) => p.$w}px;
  margin-left: ${(p) => p.$ml}px;
  font-size: 14.3px;
  line-height: 20px;
  letter-spacing: ${(p) => p.$ls ?? -0.2}px;
  text-align: ${(p) => (p.$right ? "right" : "center")};
  white-space: nowrap;
`;
const TrayIcons = styled.div<{ $ml?: number; $gap: number }>`
  display: flex;
  align-items: center;
  gap: ${(p) => p.$gap}px;
  margin-left: ${(p) => p.$ml ?? 0}px;
`;

const Art = ({ children }: { children: React.ReactNode }) => (
  <svg width="30" height="30" viewBox="0 0 30 30" overflow="visible">{children}</svg>
);
const Badge = styled.text`
  font-family: ${UI};
  font-size: 11.5px;
  font-weight: 600;
  fill: #fff;
`;

const Gradients = () => (
  <defs>
    <linearGradient id="win" x1="0" y1="0" x2="1" y2="1"><stop offset="0" stopColor="#48c0f2" /><stop offset="1" stopColor="#0570c9" /></linearGradient>
    <linearGradient id="edgeTop" x1="0" y1=".4" x2="1" y2=".5"><stop offset="0" stopColor="#1c8fd8" /><stop offset=".5" stopColor="#2fc0cf" /><stop offset="1" stopColor="#69e04e" /></linearGradient>
    <linearGradient id="edgeLow" x1="0" y1="0" x2="1" y2="1"><stop offset="0" stopColor="#1590df" /><stop offset="1" stopColor="#114a8b" /></linearGradient>
    <linearGradient id="folder" x1="0" y1="0" x2="1" y2="1"><stop offset="0" stopColor="#ffdc6b" /><stop offset="1" stopColor="#f5b920" /></linearGradient>
    <linearGradient id="store" x1="0" y1="0" x2="0" y2="1"><stop offset="0" stopColor="#14609f" /><stop offset="1" stopColor="#1c2f5a" /></linearGradient>
    <linearGradient id="mail" x1="0" y1="0" x2="1" y2="1"><stop offset="0" stopColor="#35b8ef" /><stop offset="1" stopColor="#0e86dc" /></linearGradient>
  </defs>
);

const TaskbarRow = () => (
  <Taskbar>
    <Apps>
      <AppSlot>
        <Art><Gradients /><g fill="url(#win)"><rect x=".8" y="1" width="14" height="14" rx="1" /><rect x="15.600" y="1" width="14" height="14" rx="1" /><rect x=".8" y="15.800" width="14" height="14" rx="1" /><rect x="15.600" y="15.800" width="14" height="14" rx="1" /></g></Art>
      </AppSlot>
      <AppSlot>
        <Art><g fill="none" stroke="#222" strokeLinecap="round"><circle cx="17" cy="12" r="10.300" strokeWidth="2.600" /><path d="M9.500 20l-6.500 7" strokeWidth="3.400" /></g></Art>
      </AppSlot>
      <AppSlot>
        <Art><rect x=".5" y="1" width="29.500" height="28" rx="1.500" fill="#1757a0" /><rect x="3" y="3.500" width="11" height="23" rx="1" fill="#f6f6f8" /><rect x="16" y="3.500" width="11.500" height="12" rx="1" fill="#5fd2fb" /><rect x="16" y="16.500" width="11.500" height="4" fill="#2a9de6" /><rect x="16" y="21" width="11.500" height="5.500" rx="1" fill="#1482d6" /></Art>
      </AppSlot>
      <AppSlot>
        <Art><circle cx="14.800" cy="14.800" r="9.600" fill="none" stroke="#9be2f7" strokeWidth="3.600" /><circle cx="14.800" cy="14.800" r="9.600" fill="none" stroke="#2bb8e8" strokeWidth="2.200" /></Art>
      </AppSlot>
      <AppSlot $open>
        <Art>
          <path d="M.2 14C1 6 7 0 15 0c8.500 0 15 6 15 12.500 0 5-3.500 8-8 8-4 0-5.500-2-4.500-4 1.500-3 0-6-4-6C8 10.500 3 12 .2 14z" fill="url(#edgeTop)" />
          <path d="M.1 15C1 9 6 7 10 7.500c5 .5 8.500 4 8 7.500-1.500-2.500-5-3-6.500 0-2 5 2 10.500 9 10.500 3 0 5-1 7-2.300C25 27.500 20.500 30 15 30 6.500 30-.5 23.500.1 15z" fill="url(#edgeLow)" />
          <path d="M11 15.500C9 21 14 26 20 25.600c3.300 0 5.500-1.200 7.500-2.500-3 4.500-8 5.500-11 5C9 27 7.500 19 11 15.500z" fill="#124a86" />
        </Art>
        <Indicator $w={20} $c="#0b72cf" />
      </AppSlot>
      <AppSlot>
        <Art><path d="M0 3.500Q0 2 1.500 2H10l3 3v4H0z" fill="#d99a12" /><path d="M0 8h10l3-3h15.500Q30 5 30 6.500V29H0z" fill="url(#folder)" /><path d="M4.500 29v-6q0-2.500 2.500-2.500h16q2.500 0 2.500 2.500v6z" fill="#1273bf" /><path d="M9 24.500h12" stroke="#0a4d8c" strokeWidth="1.500" /></Art>
      </AppSlot>
      <AppSlot>
        <Art><path d="M8 6V2.500Q8 1.500 9 1.500h12q1 0 1 1V6" fill="none" stroke="#2fb1ee" strokeWidth="2" /><path d="M.5 5.500h29V25q0 5-5 5h-19q-5 0-5-5z" fill="url(#store)" /><path d="M9.500 12H14.500V17H9.500z" fill="#f25022" /><path d="M15.500 12H20.500V17H15.500z" fill="#7fba00" /><path d="M9.500 18H14.500V23H9.500z" fill="#00a4ef" /><path d="M15.500 18H20.500V23H15.500z" fill="#ffb900" /></Art>
      </AppSlot>
      <AppSlot>
        <Art><rect width="30" height="30" fill="#29aad6" /><path d="M9.500 4.500L6.500 24.500l4 1z" fill="#0a4d74" /><path d="M10 4.500h5V20h8v5H10z" fill="#fff" /></Art>
      </AppSlot>
      <AppSlot>
        <Art><rect width="30" height="30" rx="1.500" fill="#107c10" /><circle cx="15" cy="15" r="12.500" fill="#fff" /><path d="M15 11.500C11 15 8 20 6.500 25.500L3.500 22C5 17 8 12 11.300 8.600 9 6.800 7.500 6 6 6q4-3 9 .5Q20 3 24 6c-1.500 0-3 .8-5.300 2.600C22 12 25 17 26.500 22l-3 3.500C22 20 19 15 15 11.500z" fill="#107c10" /></Art>
      </AppSlot>
      <AppSlot>
        <Art><path d="M0 10L15 0l15 10v4H0z" fill="#0a5ea8" /><path d="M3 10h24v8H3z" fill="#ececec" /><path d="M0 10l15 11 15-11v19H0z" fill="url(#mail)" /><path d="M0 10l15 11 15 8H0z" fill="#2db0ec" opacity=".6" /></Art>
      </AppSlot>
      <AppSlot>
        <Art>
          <circle cx="14" cy="15" r="13.800" fill="#fbc116" />
          <path d="M2 8A13.800 13.800 0 0 1 26 8L14 8.500 8 18z" fill="#e33b2e" />
          <path d="M2 8A13.800 13.800 0 0 0 14 28.800L20 18.500 8 18.500z" fill="#27a148" />
          <circle cx="14" cy="15" r="6.800" fill="#fff" /><circle cx="14" cy="15" r="5.300" fill="#3b7ded" />
          <circle cx="25.500" cy="4" r="10" fill="#8d6e63" />
          <Badge x="25.500" y="8" textAnchor="middle">S</Badge>
        </Art>
        <Indicator $w={8} $c="#8a8a8a" />
      </AppSlot>
    </Apps>
    <Tray>
      <TrayIcons $gap={14}>
        <Icon w={16} h={10} c="#222" sw={1.5}><path d="M1 8.800L8 1.500l7 7.300" /></Icon>
        <Icon w={17} h={17} sw={0}><circle cx="8.500" cy="8.500" r="8.500" fill="#48b3d4" /><path d="M6 4.500h2.600v6.300H12V13H6z" fill="#fff" /></Icon>
        <Icon w={16} h={20} c="#fff" sw={1.3}><rect width="16" height="20" rx="7" fill="#0a84f5" stroke="none" /><path d="M4.800 7l6.400 6L8 16V4l3.200 3-6.400 6" /></Icon>
      </TrayIcons>
      <TrayText $w={36} $ml={17}>ENG<br />IN</TrayText>
      <TrayIcons $gap={10} $ml={19}>
        <Icon w={20} h={15} c="#222"><path d="M.8 5.600q9.200-8.800 18.400 0M3.600 8.400q6.400-6 12.800 0M6.500 11.200q3.500-3.200 7 0" /><circle cx="10" cy="13" r="1.300" fill="#222" stroke="none" /></Icon>
        <Icon w={20} h={16} c="#222" sw={1.3}><path d="M1 5.500h3L8.500 1.200v13.600L4 10.500H1zM11 5.600q1.500 2.400 0 4.800M13.600 3.600q3 4.400 0 8.800M16.200 1.600q4.400 6.400 0 12.800" /></Icon>
        <Icon w={20} h={15} c="#222" sw={1.5}><path d="M9.500 3H15q2.500 0 2.500 2.500v4q0 2.500-2.500 2.500H6M19 6.500v2.500" /><path d="M1.800 11C0 6 3 3.500 7.500 1c1.500 5 .5 9.500-4 10L1 13.500" fill="#222" /></Icon>
      </TrayIcons>
      <TrayText $w={80} $ml={16} $ls={0.2} $right>12:26<br />30-04-2022</TrayText>
    </Tray>
  </Taskbar>
);

export default function App() {
  return (
    <Screen>
      <GlobalStyle />
      <Tabs />
      <AddressBar />
      <Main>
        <Reader>
          <PdfToolbar />
          <Slides />
        </Reader>
        <Scrollbar>
          <Icon w={10} h={6} sw={0}><path d="M0 6L5 0l5 6z" fill="#505050" /></Icon>
          <Track><Thumb /></Track>
          <Icon w={8} h={6} sw={0}><path d="M0 0h8L4 5.500z" fill="#505050" /></Icon>
        </Scrollbar>
      </Main>
      <TaskbarRow />
    </Screen>
  );
}
